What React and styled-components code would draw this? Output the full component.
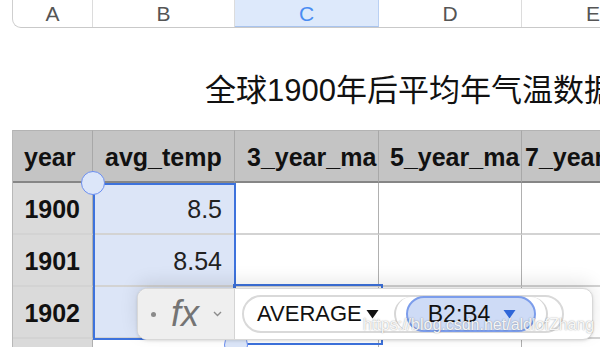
import React from "react";
import styled, { createGlobalStyle } from "styled-components";

const GlobalStyle = createGlobalStyle`
  html, body {
    margin: 0;
    padding: 0;
    background: #ffffff;
  }
  body {
    font-family: "Liberation Sans", "Noto Sans CJK SC", sans-serif;
    overflow: hidden;
  }
`;

const COLS = [
  { key: "A", w: 81, label: "year", pad: 11 },
  { key: "B", w: 142, label: "avg_temp", pad: 12 },
  { key: "C", w: 144, label: "3_year_ma", pad: 12 },
  { key: "D", w: 143, label: "5_year_ma", pad: 11 },
  { key: "E", w: 143, label: "7_year_ma", pad: 3 },
];

const ROWS = [
  { year: "1900", avg: "8.5" },
  { year: "1901", avg: "8.54" },
  { year: "1902", avg: "8.5" },
  { year: "1903", avg: "8.43" },
];

const Sheet = styled.div`
  position: relative;
  width: 600px;
  height: 347px;
  overflow: hidden;
  background: #fff;
`;

const LetterBar = styled.div`
  display: flex;
  margin-left: 12px;
  height: 28px;
  box-sizing: border-box;
  border-left: 1px solid #cfcfcf;
  border-bottom: 1px solid #c9c9c9;
  border-bottom-left-radius: 9px;
  overflow: hidden;
`;

const Letter = styled.div`
  flex: 0 0 ${({ $w }) => $w}px;
  box-sizing: border-box;
  display: flex;
  align-items: center;
  justify-content: center;
  padding-top: 1px;
  font-size: 21px;
  color: ${({ $active }) => ($active ? "#4a8cf2" : "#555")};
  background: ${({ $active }) => ($active ? "#dde9fb" : "transparent")};
  border-right: 1px solid ${({ $active }) => ($active ? "#b9d0f3" : "#dcdcdc")};
  border-bottom: ${({ $active }) => ($active ? "1px solid #a9c4ee" : "none")};
`;

const Title = styled.div`
  height: 102px;
  box-sizing: border-box;
  padding: 45px 0 0 205px;
  font-size: 31px;
  line-height: 36px;
  color: #111;
  white-space: nowrap;
`;

const TableWrap = styled.div`
  position: relative;
  margin-left: 12px;
`;

const Grid = styled.div`
  display: grid;
  grid-template-columns: ${COLS.map((c, i) => `${i === 0 ? c.w - 1 : c.w}px`).join(" ")};
  grid-template-rows: 53px;
  grid-auto-rows: 52px;
  border-left: 1px solid #b8b8b8;
`;

const HeadCell = styled.div`
  display: flex;
  align-items: center;
  box-sizing: border-box;
  padding: 3px 0 0 ${({ $pad }) => $pad}px;
  background: #c4c4c4;
  border-top: 1px solid #b3b3b3;
  border-bottom: 2px solid #868686;
  border-right: 1px solid #a8a8a8;
  font-size: 25px;
  font-weight: 700;
  color: #111;
  white-space: nowrap;
  overflow: hidden;
`;

const Cell = styled.div`
  display: flex;
  align-items: center;
  justify-content: flex-end;
  box-sizing: border-box;
  padding: 3px 12px 0 0;
  background: ${({ $stub, $selected }) =>
    $stub ? "#dadada" : $selected ? "#dce5f7" : "#ffffff"};
  border-bottom: 2px solid #d3d3d3;
  border-right: 1px solid #b0b0b0;
  font-size: 25px;
  font-weight: ${({ $stub }) => ($stub ? 700 : 400)};
  color: ${({ $stub }) => ($stub ? "#111" : "#222")};
  white-space: nowrap;
  overflow: hidden;
`;

const Selection = styled.div`
  position: absolute;
  left: 81px;
  top: 53px;
  width: 143px;
  height: 157px;
  box-sizing: border-box;
  border: 2px solid #3d72dc;
  pointer-events: none;
`;

const EditCell = styled.div`
  position: absolute;
  left: 221px;
  top: 154px;
  width: 150px;
  height: 61px;
  box-sizing: border-box;
  border: 2px solid #3d72dc;
  pointer-events: none;
`;

const Handle = styled.div`
  position: absolute;
  left: ${({ $x }) => $x - 12}px;
  top: ${({ $y }) => $y - 12}px;
  width: 24px;
  height: 24px;
  box-sizing: border-box;
  border-radius: 50%;
  background: #dce6f9;
  border: 1.5px solid #6b8ef0;
  z-index: ${({ $top }) => ($top ? 3 : 1)};
`;

const FormulaBar = styled.div`
  position: absolute;
  left: 137px;
  top: 288px;
  width: 456px;
  height: 52px;
  box-sizing: border-box;
  display: flex;
  border: 1px solid #d8d8d8;
  border-radius: 10px;
  background: #fff;
  overflow: hidden;
  z-index: 2;
  box-shadow: 0 -6px 18px rgba(0, 0, 0, 0.1), 0 1px 3px rgba(0, 0, 0, 0.12);
`;

const FxBox = styled.div`
  flex: 0 0 97px;
  display: flex;
  align-items: center;
  box-sizing: border-box;
  padding-left: 13px;
  background: #efefef;
  border-right: 1px solid #d4d4d4;
`;

const Dot = styled.span`
  width: 5px;
  height: 5px;
  border-radius: 50%;
  background: #8a8a8a;
  margin-right: 16px;
`;

const Fx = styled.span`
  font-size: 36px;
  font-style: italic;
  color: #747474;
  line-height: 1;
  margin: 0 14px 0 -1px;
`;

const Expression = styled.div`
  flex: 1;
  display: flex;
  align-items: center;
  padding-left: 7px;
`;

const FuncPill = styled.div`
  display: flex;
  align-items: center;
  height: 38px;
  box-sizing: border-box;
  padding: 0 14px 0 13px;
  border: 2px solid #d9d9d9;
  border-radius: 20px;
  font-size: 22px;
  color: #111;
`;

const Args = styled.div`
  display: flex;
  align-items: center;
  height: 34px;
  box-sizing: border-box;
  margin-left: 15px;
  padding: 0 10px;
  border-left: 2px solid #d6d6d6;
  border-right: 2px solid #d6d6d6;
  border-radius: 18px;
`;

const RefPill = styled.div`
  display: flex;
  align-items: center;
  height: 36px;
  box-sizing: border-box;
  padding: 0 18px 0 20px;
  background: #cedbf6;
  border: 2px solid #7c9deb;
  border-radius: 20px;
  font-size: 23px;
  color: #111;
`;

const Caret = styled.svg`
  margin-left: ${({ $gap }) => $gap}px;
  flex: none;
`;

const Watermark = styled.div`
  position: absolute;
  left: 363px;
  top: 316px;
  font-size: 16px;
  line-height: 18px;
  color: rgba(255, 255, 255, 0.92);
  text-shadow: 0 0 1.5px rgba(0, 0, 0, 0.45);
  white-space: nowrap;
  z-index: 4;
  pointer-events: none;
`;

function Triangle({ color, gap }) {
  return (
    <Caret $gap={gap} width="13" height="10" viewBox="0 0 13 10">
      <path d="M0.5 1 L12.5 1 L6.5 9.5 Z" fill={color} />
    </Caret>
  );
}

export default function App() {
  return (
    <Sheet>
      <GlobalStyle />
      <LetterBar>
        {COLS.map((c) => (
          <Letter key={c.key} $w={c.key === "A" ? c.w - 1 : c.w} $active={c.key === "C"}>
            {c.key}
          </Letter>
        ))}
      </LetterBar>

      <Title>全球1900年后平均年气温数据</Title>

      <TableWrap>
        <Grid>
          {COLS.map((c) => (
            <HeadCell key={c.key} $pad={c.pad}>
              {c.label}
            </HeadCell>
          ))}
          {ROWS.map((r, i) => (
            <React.Fragment key={r.year}>
              <Cell $stub>{r.year}</Cell>
              <Cell $selected={i < 3}>{r.avg}</Cell>
              <Cell />
              <Cell />
              <Cell />
            </React.Fragment>
          ))}
        </Grid>
        <Selection />
        <EditCell />
        <Handle $x={81} $y={53} $top />
        <Handle $x={224} $y={215} />
      </TableWrap>

      <FormulaBar>
        <FxBox>
          <Dot />
          <Fx>fx</Fx>
          <svg width="9" height="6" viewBox="0 0 9 6">
            <path d="M1 1 L4.5 4.5 L8 1" fill="none" stroke="#8c8c8c" strokeWidth="1.4" />
          </svg>
        </FxBox>
        <Expression>
          <FuncPill>
            AVERAGE
            <Triangle color="#111" gap={4} />
            <Args>
              <RefPill>
                B2:B4
                <Triangle color="#2f66d8" gap={13} />
              </RefPill>
            </Args>
          </FuncPill>
        </Expression>
      </FormulaBar>

      <Watermark>https://blog.csdn.net/aldlofZhang</Watermark>
    </Sheet>
  );
}
